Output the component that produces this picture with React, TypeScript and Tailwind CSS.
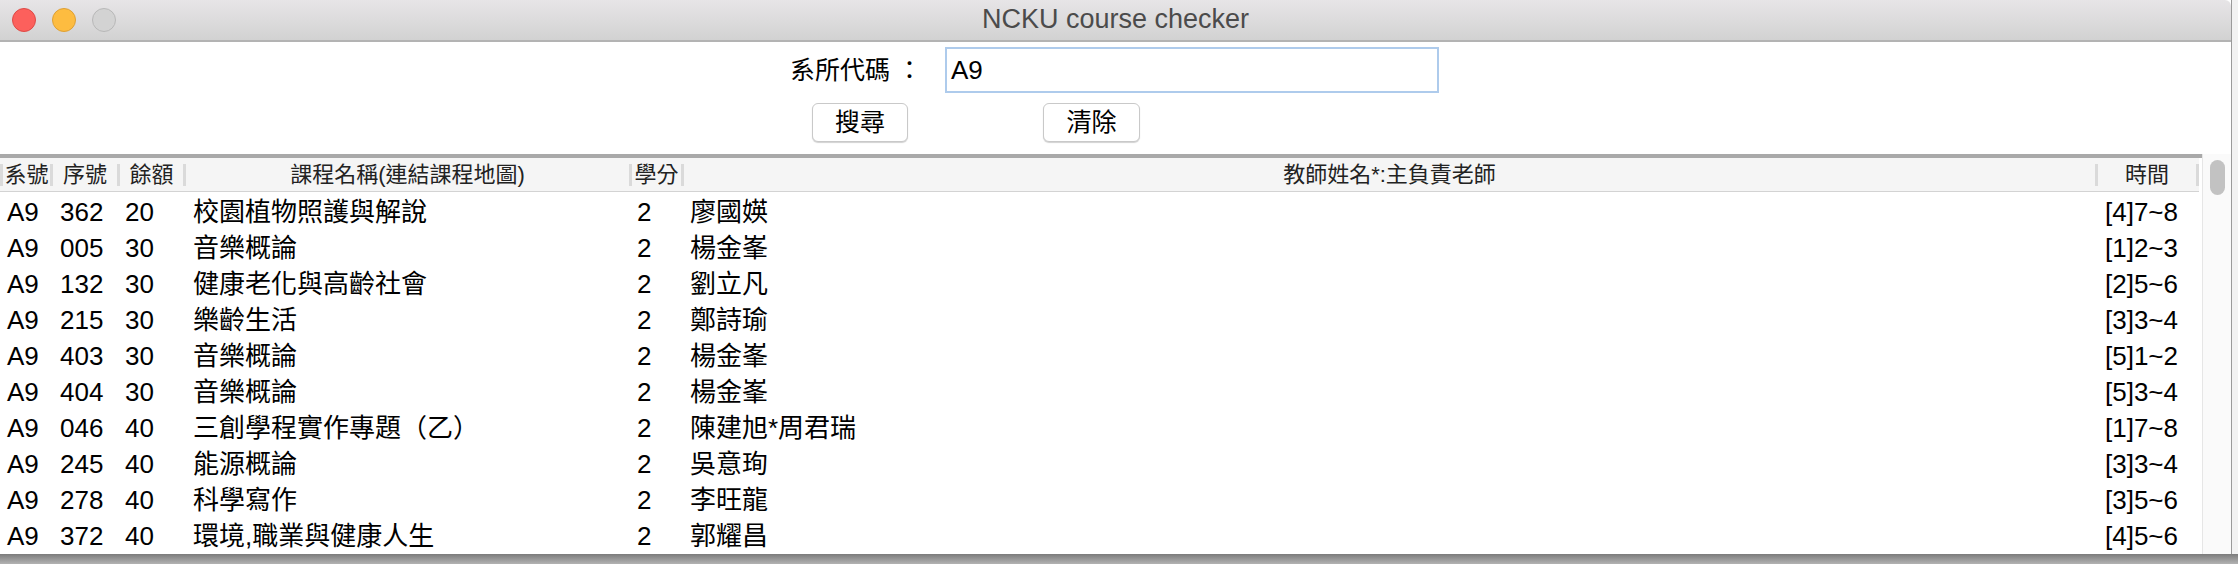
import React from 'react';

const cols = [
  { title: '系號', w: 'w-[50px]', pl: 'pl-[4px]' },
  { title: '序號', w: 'w-[67px]', pl: 'pl-[7px]' },
  { title: '餘額', w: 'w-[66px]', pl: 'pl-[5px]' },
  { title: '課程名稱(連結課程地圖)', w: 'w-[446px]', pl: 'pl-[7px]' },
  { title: '學分', w: 'w-[52px]', pl: 'pl-[5px]' },
  { title: '教師姓名*:主負責老師', w: 'w-[1414px]', pl: 'pl-[6px]' },
  { title: '時間', w: 'w-[101px]', pl: 'pl-[7px]' },
];

const rows = [
  ['A9', '362', '20', '校園植物照護與解說', '2', '廖國媖', '[4]7~8'],
  ['A9', '005', '30', '音樂概論', '2', '楊金峯', '[1]2~3'],
  ['A9', '132', '30', '健康老化與高齡社會', '2', '劉立凡', '[2]5~6'],
  ['A9', '215', '30', '樂齡生活', '2', '鄭詩瑜', '[3]3~4'],
  ['A9', '403', '30', '音樂概論', '2', '楊金峯', '[5]1~2'],
  ['A9', '404', '30', '音樂概論', '2', '楊金峯', '[5]3~4'],
  ['A9', '046', '40', '三創學程實作專題（乙）', '2', '陳建旭*周君瑞', '[1]7~8'],
  ['A9', '245', '40', '能源概論', '2', '吳意珣', '[3]3~4'],
  ['A9', '278', '40', '科學寫作', '2', '李旺龍', '[3]5~6'],
  ['A9', '372', '40', '環境,職業與健康人生', '2', '郭耀昌', '[4]5~6'],
];

const font = "font-['Liberation_Sans','Noto_Sans_CJK_TC',sans-serif]";

export default function App() {
  return (
    <div className={`w-[2238px] h-[564px] flex flex-col bg-[#f3f3f3] overflow-hidden ${font}`}>
      <div className="flex h-[554px]">
        {/* Window */}
        <div className="w-[2232px] flex flex-col bg-white border-r border-[#9a9a9a]">
          {/* Title bar */}
          <div className="relative h-[42px] shrink-0 bg-gradient-to-b from-[#e7e5e7] to-[#d2d2d2] border-b-2 border-[#b3b3b3] rounded-tr-[6px] flex items-center justify-center">
            <div className="absolute left-[12px] top-[8px] flex gap-[16px]">
              <div className="w-[24px] h-[24px] rounded-full bg-[#fc605c] border border-[#de4a46]"></div>
              <div className="w-[24px] h-[24px] rounded-full bg-[#fdbc40] border border-[#dea034]"></div>
              <div className="w-[24px] h-[24px] rounded-full bg-[#d3d3d3] border border-[#b8b8b8]"></div>
            </div>
            <span className="text-[27px] leading-none text-[#4b4b4b] -mt-[1px]">NCKU course checker</span>
          </div>

          {/* Form */}
          <div className="h-[112px] shrink-0 flex flex-col">
            <div className="flex items-center pl-[790px] pt-[5px] h-[51px]">
              <span className="text-[25px] leading-none text-black w-[155px]">系所代碼 ：</span>
              <div className="w-[494px] h-[46px] border-2 border-[#aecbec] flex items-center pl-[4px] text-[26px] text-black">
                A9
              </div>
            </div>
            <div className="flex pl-[812px] pt-[10px] gap-[135px]">
              <button className="w-[96px] h-[39px] rounded-[6px] bg-white border border-[#c9c9c9] shadow-[0_1px_1px_rgba(0,0,0,0.18)] text-[25px] leading-none text-black">
                搜尋
              </button>
              <button className="w-[97px] h-[39px] rounded-[6px] bg-white border border-[#c9c9c9] shadow-[0_1px_1px_rgba(0,0,0,0.18)] text-[25px] leading-none text-black">
                清除
              </button>
            </div>
          </div>

          {/* Table + scrollbar */}
          <div className="flex flex-1">
            <div className="w-[2202px] flex flex-col">
              <div className="h-[4px] bg-[#a9a9a9]"></div>
              <div className="w-[2199px] flex flex-col flex-1">
                {/* Header */}
                <div className="h-[34px] flex items-center bg-[#f5f5f5] border-b border-[#d3d3d3]">
                  <div className="w-[3px] h-[22px] bg-[#dadada]"></div>
                  {cols.map((c) => (
                    <div key={c.title} className={`${c.w} flex items-center h-full`}>
                      <span className="flex-1 text-center text-[22px] leading-none text-[#222]">{c.title}</span>
                      <div className="w-[3px] h-[22px] bg-[#dadada]"></div>
                    </div>
                  ))}
                </div>
                {/* Rows */}
                <div className="pt-[2px]">
                  {rows.map((r, i) => (
                    <div key={i} className="flex h-[36px] items-center pl-[3px]">
                      {r.map((cell, j) => (
                        <div key={j} className={`${cols[j].w} ${cols[j].pl} text-[26px] leading-none text-black whitespace-nowrap`}>
                          {cell}
                        </div>
                      ))}
                    </div>
                  ))}
                </div>
              </div>
            </div>
            {/* Scrollbar */}
            <div className="flex-1 bg-[#fafafa] border-l border-[#e6e6e6] pt-[6px] flex justify-center">
              <div className="w-[15px] h-[35px] rounded-full bg-[#c2c2c2]"></div>
            </div>
          </div>
        </div>
        <div className="flex-1 bg-[#f2f2f2]"></div>
      </div>
      {/* Shadow below window */}
      <div className="h-[10px] bg-gradient-to-b from-[#7c7c7c] to-[#b3b3b3]"></div>
    </div>
  );
}
